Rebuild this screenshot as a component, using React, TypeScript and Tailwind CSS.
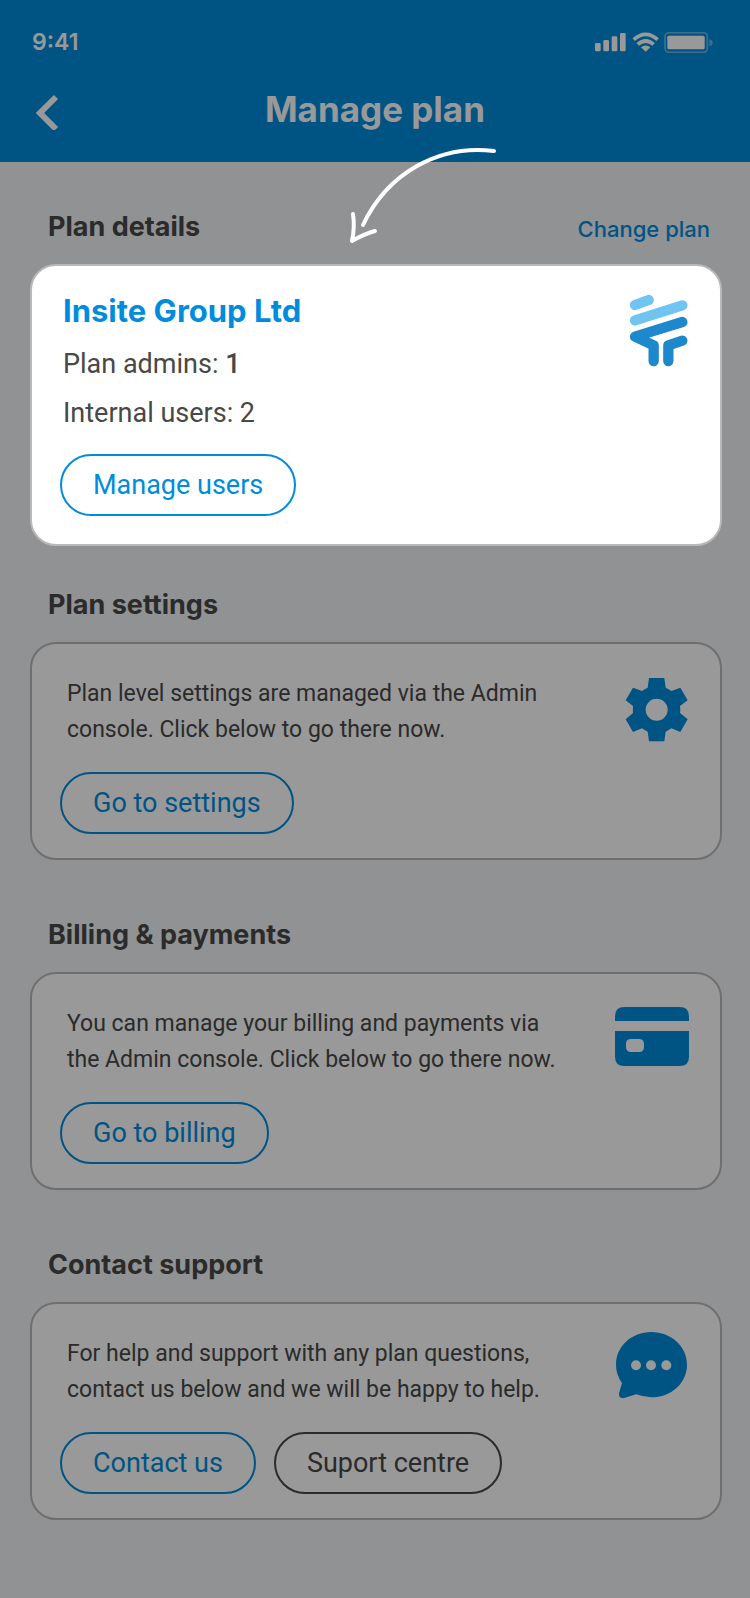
import { FC, ReactNode } from 'react';
import clsx from 'clsx';

const StatusIcons: FC = () => (
    <svg className="w-[118px] h-[21px]" viewBox="661 96 354 63" fill="#fff" aria-hidden="true">
        <rect x="661" y="129" width="17" height="25" rx="4" />
        <rect x="686" y="120" width="17" height="34" rx="4" />
        <rect x="711" y="109" width="17" height="45" rx="4" />
        <rect x="736" y="99" width="17" height="55" rx="4" />
        <g fill="none" stroke="#fff" strokeWidth="11">
            <path d="M777 119Q813 87 849 119" />
            <path d="M789 133Q813 113 837 133" />
        </g>
        <path d="M799 142Q813 131 827 142L813 155Z" />
        <rect x="871" y="98" width="127" height="59" rx="12" fill="none" stroke="#fff" strokeWidth="5" opacity=".4" />
        <rect x="878" y="107" width="112" height="41" rx="5" />
        <path d="M1004 118Q1014 120 1014 128Q1014 136 1004 138Z" opacity=".4" />
    </svg>
);

const LogoIcon: FC = () => (
    <svg
        className="w-[74px] h-[74px] shrink-0"
        viewBox="165 132 222 222"
        fill="none"
        strokeWidth="31"
        strokeLinecap="round"
        strokeLinejoin="round"
        aria-hidden="true"
    >
        <path stroke="#70c4f2" d="M225 165L266 150M225 211L367 166" />
        <path stroke="#1e88cc" d="M367 216L225 260L281 286V333M367 272L325 286V333" />
    </svg>
);

const GearIcon: FC = () => (
    <svg className="w-[74px] h-[74px] shrink-0" viewBox="165 96 222 222" fill="#008cdc" aria-hidden="true">
        <path
            fillRule="evenodd"
            d="M267 114H313L317 143Q326 147 334 153L361 143L383 181L360 198Q362 209 360 219L383 238L361 276L334 265Q326 271 317 275L313 304H267L263 275Q254 271 246 265L219 276L197 238L219 219Q218 209 219 198L197 181L219 143L246 153Q254 147 263 143ZM290 176A33 33 0 1 0 290 242A33 33 0 1 0 290 176Z"
        />
    </svg>
);

const CardIcon: FC = () => (
    <svg className="w-[74px] h-[74px] shrink-0" viewBox="165 126 222 222" fill="#008cdc" aria-hidden="true">
        <path d="M165 183V169Q165 141 193 141H359Q387 141 387 169V183Z" />
        <path
            fillRule="evenodd"
            d="M165 213H387V290Q387 318 359 318H193Q165 318 165 290ZM213 237Q198 237 198 252V261Q198 276 213 276H237Q252 276 252 261V252Q252 237 237 237Z"
        />
    </svg>
);

const ChatIcon: FC = () => (
    <svg className="w-[74px] h-[74px] shrink-0" viewBox="165 126 222 222" fill="#008cdc" aria-hidden="true">
        <path
            fillRule="evenodd"
            d="M274 126C333 126 381 169 381 224C381 279 333 322 274 322Q249 321 229 313L192 324Q175 327 177 310L186 279Q168 254 168 224C168 169 215 126 274 126ZM228 211A15 15 0 1 0 228 241A15 15 0 1 0 228 211ZM273 211A15 15 0 1 0 273 241A15 15 0 1 0 273 211ZM319 211A15 15 0 1 0 319 241A15 15 0 1 0 319 211Z"
        />
    </svg>
);

interface PillButtonProps {
    children: ReactNode;
    dark?: boolean;
}

const PillButton: FC<PillButtonProps> = ({ children, dark }) => (
    <button
        type="button"
        className={clsx(
            "h-[62px] px-[31px] rounded-[31px] border-2 font-['Roboto',sans-serif] text-[27px] leading-8 whitespace-nowrap",
            dark ? 'border-[#484848] text-[#484848]' : 'border-[#008cdc] text-[#008cdc]'
        )}
    >
        {children}
    </button>
);

const SectionTitle: FC<{ children: ReactNode }> = ({ children }) => (
    <h2 className="text-[27px] leading-10 font-bold text-[#484848]">{children}</h2>
);

interface SettingsSectionProps {
    title: string;
    lines: string[];
    icon: ReactNode;
    children: ReactNode;
}

const SettingsSection: FC<SettingsSectionProps> = ({ title, lines, icon, children }) => (
    <section>
        <div className="pl-[18px] mb-[17px]">
            <SectionTitle>{title}</SectionTitle>
        </div>
        <div className="flex justify-between items-start rounded-[26px] border-2 border-[#b9b9b9] bg-white pt-7 pb-6 pl-7 pr-[31px]">
            <div>
                <p className="pt-1 pl-[7px] mb-6 font-['Roboto',sans-serif] text-[23px] leading-9 text-[#484848]">
                    {lines.map(line => (
                        <span key={line} className="block">{line}</span>
                    ))}
                </p>
                <div className="flex gap-[18px]">{children}</div>
            </div>
            {icon}
        </div>
    </section>
);

export default function App() {
    return (
        <div className="relative min-h-screen bg-[#f2f3f6] font-['Inter',sans-serif]">
            <header className="bg-[#008cdc] text-white pt-[31px] h-[162px]">
                <div className="flex items-center justify-between pl-8 pr-[37px] h-[22px]">
                    <span className="text-[23px] leading-6 font-semibold">9:41</span>
                    <StatusIcons />
                </div>
                <div className="grid grid-cols-[60px_1fr_60px] items-center px-8 mt-[31px] h-[50px]">
                    <button type="button" aria-label="Back">
                        <svg className="w-[30px] h-[42px]" viewBox="0 0 30 42" fill="none" stroke="#fff" strokeWidth="6">
                            <path d="M24 9L8 25L24 41" />
                        </svg>
                    </button>
                    <h1 className="text-[35px] leading-10 font-bold text-center">Manage plan</h1>
                </div>
            </header>

            <main className="pl-[30px] pr-7 pt-[45px] pb-[78px]">
                <div className="flex justify-between items-center pl-[18px] pr-3 mb-[17px]">
                    <SectionTitle>Plan details</SectionTitle>
                    <a href="#change-plan" className="pt-1 text-[22px] leading-8 font-medium text-[#008cdc]">
                        Change plan
                    </a>
                </div>
                {/* Sits above the dimming layer */}
                <section className="relative z-20 flex justify-between items-start rounded-[26px] border-2 border-[#b9b9b9] bg-white pb-7 pl-7 pr-[31px]">
                    <div className="pt-[21px]">
                        <div className="pl-[3px] mb-4 font-['Roboto',sans-serif] text-[27px] leading-[49px] text-[#484848]">
                            <h3 className="mb-[5px] font-['Inter',sans-serif] text-[31px] leading-[48px] font-bold text-[#008cdc]">
                                Insite Group Ltd
                            </h3>
                            <p>Plan admins: <span className="font-medium">1</span></p>
                            <p>Internal users: 2</p>
                        </div>
                        <PillButton>Manage users</PillButton>
                    </div>
                    <div className="pt-7">
                        <LogoIcon />
                    </div>
                </section>

                <div className="flex flex-col gap-[55px] mt-[39px]">
                    <SettingsSection
                        title="Plan settings"
                        lines={['Plan level settings are managed via the Admin', 'console. Click below to go there now.']}
                        icon={<GearIcon />}
                    >
                        <PillButton>Go to settings</PillButton>
                    </SettingsSection>
                    <SettingsSection
                        title="Billing & payments"
                        lines={['You can manage your billing and payments via', 'the Admin console. Click below to go there now.']}
                        icon={<CardIcon />}
                    >
                        <PillButton>Go to billing</PillButton>
                    </SettingsSection>
                    <SettingsSection
                        title="Contact support"
                        lines={['For help and support with any plan questions,', 'contact us below and we will be happy to help.']}
                        icon={<ChatIcon />}
                    >
                        <PillButton>Contact us</PillButton>
                        <PillButton dark>Suport centre</PillButton>
                    </SettingsSection>
                </div>
            </main>

            {/* Walkthrough overlay */}
            <div className="absolute inset-0 z-10 bg-black/40 pointer-events-none" />
            <svg
                className="absolute z-20 left-[46%] top-[140px] w-[160px] h-[110px] pointer-events-none"
                viewBox="345 140 160 110"
                fill="none"
                stroke="#fff"
                strokeWidth="4"
                strokeLinecap="round"
                strokeLinejoin="round"
                aria-hidden="true"
            >
                <path d="M494 151C438 144 387 174 363 225" />
                <path d="M353 214Q355 227 352 241Q364 234 375 231" />
            </svg>
        </div>
    );
}
